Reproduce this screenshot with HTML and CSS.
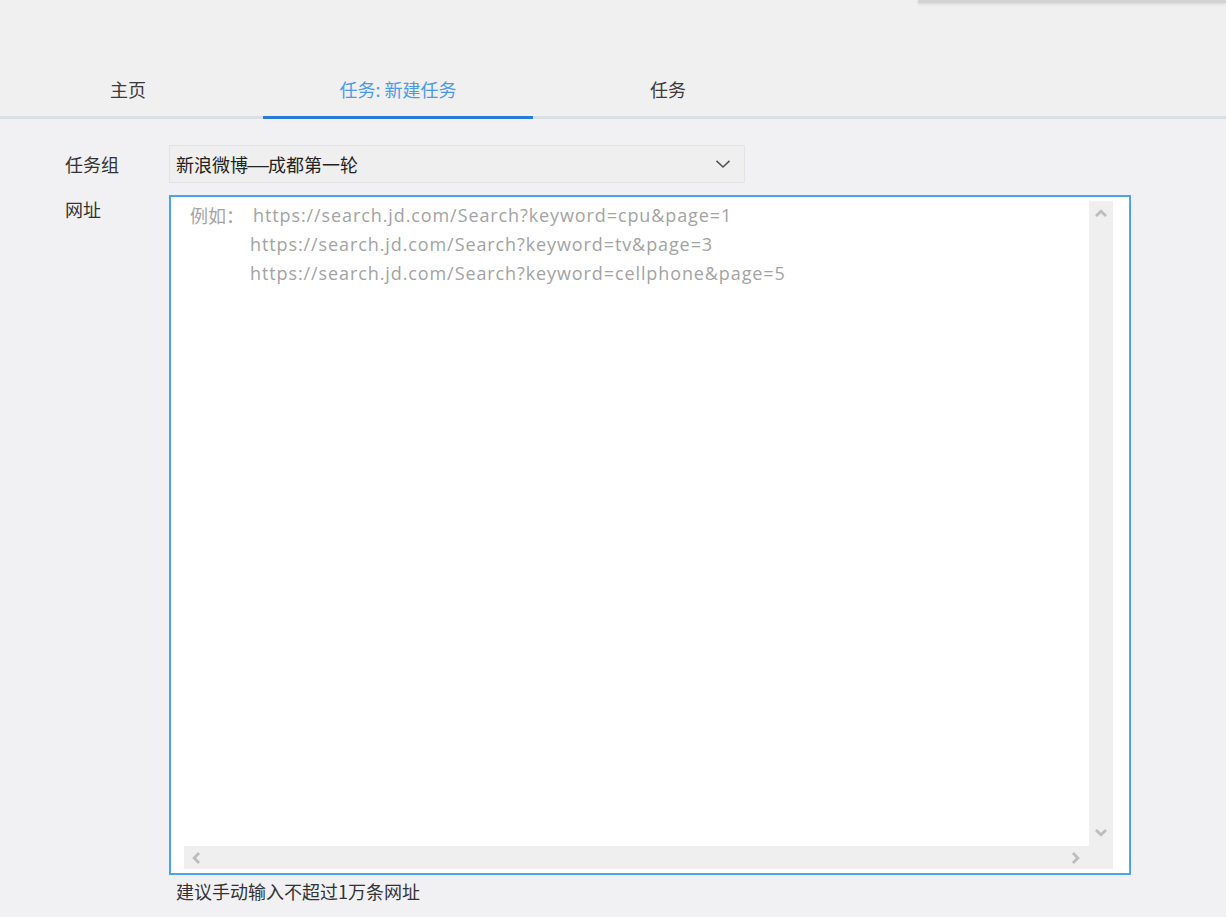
FILE: index.html
```html
<!DOCTYPE html>
<html lang="zh-CN">
<head>
<meta charset="utf-8">
<title>新建任务</title>
<link rel="stylesheet" href="styles.css">
</head>
<body>
<div class="topbar"><div class="shadow-edge"></div></div>
<nav class="tabs">
  <div class="tab">主页</div>
  <div class="tab active">任务: 新建任务</div>
  <div class="tab">任务</div>
</nav>
<main class="form">
  <div class="row">
    <label class="label label-mid">任务组</label>
    <div class="select">
      <span class="select-text">新浪微博<span class="dash">—</span>成都第一轮</span>
      <svg class="chev" width="16" height="10" viewBox="0 0 16 10"><path d="M1.5 1.8 L8 8 L14.5 1.8" fill="none" stroke="#555" stroke-width="1.6"/></svg>
    </div>
  </div>
  <div class="row row-top">
    <label class="label">网址</label>
    <div class="field">
      <div class="urlbox">
        <div class="placeholder">
          <span class="prefix">例如：</span>
          <div class="urls">
            <div class="url first">https://search.jd.com/Search?keyword=cpu&amp;page=1</div>
            <div class="url">https://search.jd.com/Search?keyword=tv&amp;page=3</div>
            <div class="url">https://search.jd.com/Search?keyword=cellphone&amp;page=5</div>
          </div>
        </div>
        <div class="vscroll">
          <svg width="14" height="9" viewBox="0 0 14 9"><path d="M2 7 L7 2.2 L12 7" fill="none" stroke="#bdbdbd" stroke-width="2.8"/></svg>
          <svg width="14" height="9" viewBox="0 0 14 9"><path d="M2 2 L7 6.8 L12 2" fill="none" stroke="#bdbdbd" stroke-width="2.8"/></svg>
        </div>
        <div class="hscroll">
          <svg width="9" height="14" viewBox="0 0 9 14"><path d="M7 2 L2.2 7 L7 12" fill="none" stroke="#bdbdbd" stroke-width="2.8"/></svg>
          <svg width="9" height="14" viewBox="0 0 9 14"><path d="M2 2 L6.8 7 L2 12" fill="none" stroke="#bdbdbd" stroke-width="2.8"/></svg>
        </div>
      </div>
      <p class="hint">建议手动输入不超过1万条网址</p>
    </div>
  </div>
</main>
</body>
</html>
```

FILE: styles.css
```css
html, body {
  margin: 0;
  padding: 0;
}
body {
  background: #f1f1f3;
  font-family: "Noto Sans CJK SC", "Open Sans", sans-serif;
  color: #333;
  width: 1226px;
  height: 917px;
  overflow: hidden;
}
.topbar {
  height: 64px;
  background: #f0f0f0;
  display: flex;
  justify-content: flex-end;
  align-items: flex-start;
}
.shadow-edge {
  width: 308px;
  height: 3px;
  background: #d3d3d3;
  box-shadow: 0 1px 3px rgba(0, 0, 0, 0.12);
}
.tabs {
  display: flex;
  background: #f0f0f0;
  border-bottom: 3px solid #dadfe6;
  height: 52px;
}
.tab {
  box-sizing: border-box;
  width: 270px;
  height: 55px;
  margin-bottom: -3px;
  border-bottom: 3px solid transparent;
  display: flex;
  align-items: center;
  justify-content: center;
  font-size: 18px;
  color: #3a3a3a;
  padding-bottom: 2px;
}
.tab:first-child {
  width: 263px;
  justify-content: flex-start;
  padding-left: 110px;
}
.tab.active {
  color: #4b9ae6;
  border-bottom-color: #2a7bd9;
}
.form {
  padding: 26px 0 0 65px;
}
.row {
  display: flex;
  align-items: center;
}
.row-top {
  align-items: flex-start;
  margin-top: 12px;
}
.label {
  width: 104px;
  font-size: 18px;
  line-height: 28px;
  color: #333;
}
.select {
  box-sizing: border-box;
  width: 576px;
  height: 38px;
  background: #efefef;
  border: 1px solid #e3e3e3;
  display: flex;
  align-items: center;
  justify-content: space-between;
  padding: 0 13px 0 6px;
}
.select-text {
  font-size: 18px;
  color: #222;
}
.dash {
  display: inline-block;
  width: 20px;
  text-align: center;
  transform: scaleX(1.5);
}
.chev {
  display: block;
}
.field {
  display: flex;
  flex-direction: column;
}
.urlbox {
  box-sizing: border-box;
  width: 962px;
  height: 680px;
  border: 2px solid #4aa2f0;
  background: #fff;
  display: grid;
  grid-template-columns: 13px 1fr 24px 16px;
  grid-template-rows: 4px 1fr 23px 4px;
}
.placeholder {
  grid-column: 1 / 3;
  grid-row: 1 / 3;
  display: flex;
  padding: 4px 0 0 19px;
  font-family: "Open Sans", "Noto Sans CJK SC", sans-serif;
  font-size: 18px;
  line-height: 29px;
  color: #a3a3a3;
  letter-spacing: 0.9px;
}
.prefix {
  font-family: "Noto Sans CJK SC", sans-serif;
  letter-spacing: 0;
  width: 60px;
  flex: none;
}
.url.first {
  margin-left: 3px;
}
.vscroll {
  grid-column: 3;
  grid-row: 2;
  background: #efefef;
  display: flex;
  flex-direction: column;
  justify-content: space-between;
  align-items: center;
  padding: 8px 0 9px;
}
.hscroll {
  grid-column: 2 / 4;
  grid-row: 3;
  background: #efefef;
  display: flex;
  justify-content: space-between;
  align-items: center;
  padding: 0 33px 0 8px;
}
.vscroll svg, .hscroll svg {
  display: block;
}
.hint {
  margin: 4px 0 0 7px;
  font-size: 18px;
  line-height: 24px;
  color: #333;
}
```
